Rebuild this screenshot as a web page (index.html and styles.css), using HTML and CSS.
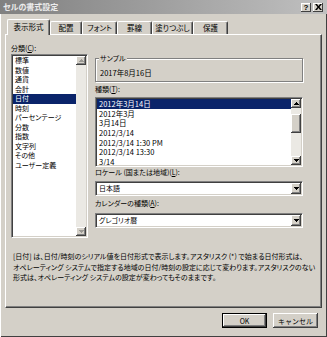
FILE: index.html
```html
<!DOCTYPE html>
<html lang="ja">
<head>
  <meta charset="UTF-8" />
  <meta name="viewport" content="width=device-width, initial-scale=1.0"/>
  <title>セルの書式設定</title>
  <link rel="stylesheet" href="styles.css">
</head>
<body>
  <div class="window">

    <!-- Title Bar -->
    <div class="titlebar">
      <div class="title">セルの書式設定</div>
      <div class="cap-buttons">
        <div class="cap-btn help">?</div>
        <div class="cap-btn">
          <svg width="7" height="6" viewBox="0 0 7 6"><path d="M0 0h2l1.5 2 1.5-2h2L4.5 3 7 6H5L3.5 4 2 6H0l2.5-3z" fill="#000"/></svg>
        </div>
      </div>
    </div>

    <div class="content">
      <!-- Tabs -->
      <div class="tabs">
        <div class="tab active" style="width: 43px">表示形式</div>
        <div class="tab" style="width: 32px">配置</div>
        <div class="tab" style="width: 35px">フォント</div>
        <div class="tab" style="width: 35px">罫線</div>
        <div class="tab" style="width: 41px">塗りつぶし</div>
        <div class="tab" style="width: 35px">保護</div>
      </div>

      <!-- Tab Panel -->
      <div class="panel">
        <div class="columns">
          <div class="col-left">
            <div class="label">分類(<u>C</u>):</div>
            <div class="listbox category">
              <ul class="items">
                <li>標準</li>
                <li>数値</li>
                <li>通貨</li>
                <li>会計</li>
                <li class="selected">日付</li>
                <li>時刻</li>
                <li>パーセンテージ</li>
                <li>分数</li>
                <li>指数</li>
                <li>文字列</li>
                <li>その他</li>
                <li>ユーザー定義</li>
              </ul>
              <div class="scrollbar">
                <div class="arrow disabled"><svg width="5" height="3"><path d="M2 0h1v1h1v1h1v1H0V2h1V1h1z"/></svg></div>
                <div class="track"></div>
                <div class="arrow disabled"><svg width="5" height="3"><path d="M0 0h5v1H4v1H3v1H2V2H1V1H0z"/></svg></div>
              </div>
            </div>
          </div>

          <div class="col-right">
            <div class="group">
              <div class="group-title">サンプル</div>
              <div class="sample-value">2017年8月16日</div>
            </div>

            <div class="label type-label">種類(<u>T</u>):</div>
            <div class="listbox types">
              <ul class="items">
                <li class="selected">2012年3月14日</li>
                <li>2012年3月</li>
                <li>3月14日</li>
                <li>2012/3/14</li>
                <li>2012/3/14 1:30 PM</li>
                <li>2012/3/14 13:30</li>
                <li>3/14</li>
              </ul>
              <div class="scrollbar">
                <div class="arrow"><svg width="5" height="3"><path d="M2 0h1v1h1v1h1v1H0V2h1V1h1z"/></svg></div>
                <div class="track">
                  <div class="thumb"></div>
                </div>
                <div class="arrow"><svg width="5" height="3"><path d="M0 0h5v1H4v1H3v1H2V2H1V1H0z"/></svg></div>
              </div>
            </div>

            <div class="label locale-label">ロケール (国または地域)(<u>L</u>):</div>
            <div class="combo locale">
              <span class="combo-text">日本語</span>
              <div class="arrow"><svg width="5" height="3"><path d="M0 0h5v1H4v1H3v1H2V2H1V1H0z"/></svg></div>
            </div>

            <div class="label calendar-label">カレンダーの種類(<u>A</u>):</div>
            <div class="combo calendar">
              <span class="combo-text">グレゴリオ暦</span>
              <div class="arrow"><svg width="5" height="3"><path d="M0 0h5v1H4v1H3v1H2V2H1V1H0z"/></svg></div>
            </div>
          </div>
        </div>

        <p class="description">[日付] は、日付/時刻のシリアル値を日付形式で表示します。アスタリスク (*) で始まる日付形式は、<br>オペレーティング システムで指定する地域の日付/時刻の設定に応じて変わります。アスタリスクのない<br>形式は、オペレーティング システムの設定が変わってもそのままです。</p>
      </div>

      <!-- Buttons -->
      <div class="buttons">
        <button class="btn default">OK</button>
        <button class="btn">キャンセル</button>
      </div>
    </div>
  </div>
</body>
</html>
```

FILE: styles.css
```css
body {
  margin: 0;
  font-family: "Noto Sans CJK JP", sans-serif;
  font-size: 7px;
  font-feature-settings: "palt";
  color: #000;
  background-color: #d4d0c8;
}

.window {
  width: 327px;
  height: 337px;
  box-sizing: border-box;
  overflow: hidden;
  background-color: #d4d0c8;
  box-shadow: inset 1px 0 #fff, inset -1px -1px #404040;
}

/* Title bar */
.titlebar {
  height: 14px;
  display: flex;
  align-items: center;
  justify-content: space-between;
  padding: 0 4px 0 3px;
  background: linear-gradient(to right, #808080, #c0c0c0);
}

.title {
  color: #ececec;
  font-size: 8px;
  font-weight: bold;
  line-height: 14px;
}

.cap-buttons {
  display: flex;
  gap: 2px;
}

.cap-btn {
  width: 10px;
  height: 9px;
  display: flex;
  align-items: center;
  justify-content: center;
  background-color: #d4d0c8;
  box-shadow: inset -1px -1px #404040, inset 1px 1px #fff;
}

.cap-btn.help {
  font-family: "Liberation Sans", sans-serif;
  font-weight: bold;
  font-size: 8px;
  line-height: 9px;
}

/* Tabs */
.content {
  padding: 5px 5px 0 5px;
}

.tabs {
  display: flex;
  align-items: flex-end;
  height: 15px;
  padding-left: 2px;
}

.tab {
  height: 13px;
  box-sizing: border-box;
  font-size: 7.5px;
  line-height: 12px;
  text-align: center;
  white-space: nowrap;
  border-top: 1px solid #fff;
  border-left: 1px solid #fff;
  border-right: 1px solid #404040;
  border-radius: 2px 2px 0 0;
  box-shadow: inset -1px 0 #808080;
}

.tab.active {
  height: 16px;
  line-height: 14px;
  margin-bottom: -1px;
  position: relative;
  z-index: 1;
  background-color: #d4d0c8;
}

/* Panel */
.panel {
  height: 274px;
  box-sizing: border-box;
  padding: 8px 0 0 5px;
  border-top: 1px solid #fff;
  border-left: 1px solid #fff;
  border-right: 1px solid #404040;
  border-bottom: 1px solid #404040;
  box-shadow: inset -1px -1px #808080;
}

.columns {
  display: grid;
  grid-template-columns: 77px 208px;
  column-gap: 7px;
}

.col-right {
  display: flex;
  flex-direction: column;
}

.label {
  height: 11px;
  line-height: 11px;
  white-space: nowrap;
}

/* List boxes */
.listbox {
  display: flex;
  box-sizing: border-box;
  background-color: #fff;
  border: 1px solid;
  border-color: #808080 #fff #fff #808080;
  box-shadow: inset 1px 1px #404040, inset -1px -1px #d4d0c8;
  padding: 1px;
}

.items {
  flex: 1;
  margin: 0;
  padding: 0;
  list-style: none;
  overflow: hidden;
}

.items li {
  height: 9.5px;
  line-height: 9.5px;
  padding-left: 2px;
  white-space: nowrap;
}

.items li.selected {
  background-color: #0a246a;
  color: #fff;
}

.category {
  height: 184px;
}

.types {
  height: 70px;
  margin-top: 2px;
  font-size: 7.5px;
}

.types .items li {
  height: 9.7px;
  line-height: 9.7px;
}

.scrollbar {
  width: 10px;
  display: flex;
  flex-direction: column;
}

.track {
  flex: 1;
  background-color: #ebe9e4;
}

.thumb {
  height: 19px;
  margin-top: 6px;
  background-color: #d4d0c8;
  box-shadow: inset -1px -1px #404040, inset 1px 1px #fff, inset -2px -2px #808080;
}

.arrow {
  width: 10px;
  height: 9px;
  flex-shrink: 0;
  display: flex;
  align-items: center;
  justify-content: center;
  background-color: #d4d0c8;
  box-shadow: inset -1px -1px #404040, inset 1px 1px #fff, inset -2px -2px #808080;
}

.arrow svg {
  fill: #000;
}

.arrow.disabled svg {
  fill: #9a9893;
}

/* Sample group */
.group {
  height: 24px;
  box-sizing: border-box;
  margin-top: 15px;
  padding: 0 3px;
  border: 1px solid #808080;
  box-shadow: inset 1px 1px #fff, 1px 1px #fff;
}

.group-title {
  width: fit-content;
  margin-top: -6px;
  padding: 0 1px;
  line-height: 10px;
  background-color: #d4d0c8;
}

.sample-value {
  margin-top: 5px;
  padding-left: 1px;
  line-height: 10px;
  font-size: 7.5px;
}

.type-label {
  margin-top: 2px;
}

.locale-label {
  margin-top: 0;
}

.calendar-label {
  margin-top: 2px;
}

/* Combo boxes */
.combo {
  height: 15px;
  display: flex;
  align-items: stretch;
  box-sizing: border-box;
  background-color: #fff;
  border: 1px solid;
  border-color: #808080 #fff #fff #808080;
  box-shadow: inset 1px 1px #404040, inset -1px -1px #d4d0c8;
  padding: 1px;
}

.combo .arrow {
  height: auto;
}

.combo-text {
  flex: 1;
  padding-left: 2px;
  line-height: 11px;
}

.locale {
  margin-top: 3px;
}

.calendar {
  margin-top: 4px;
}

/* Description */
.description {
  margin: 13px 0 0 2px;
  line-height: 10.5px;
  white-space: nowrap;
}

/* Buttons */
.buttons {
  display: flex;
  justify-content: flex-end;
  gap: 6px;
  margin-top: 5px;
  padding-right: 4px;
}

.btn {
  width: 45px;
  height: 15px;
  padding: 0;
  font-family: inherit;
  font-size: 7px;
  color: #000;
  background-color: #d4d0c8;
  border: none;
  box-shadow: inset -1px -1px #404040, inset 1px 1px #fff, inset -2px -2px #808080;
}

.btn.default {
  border: 1px solid #000;
}
```
